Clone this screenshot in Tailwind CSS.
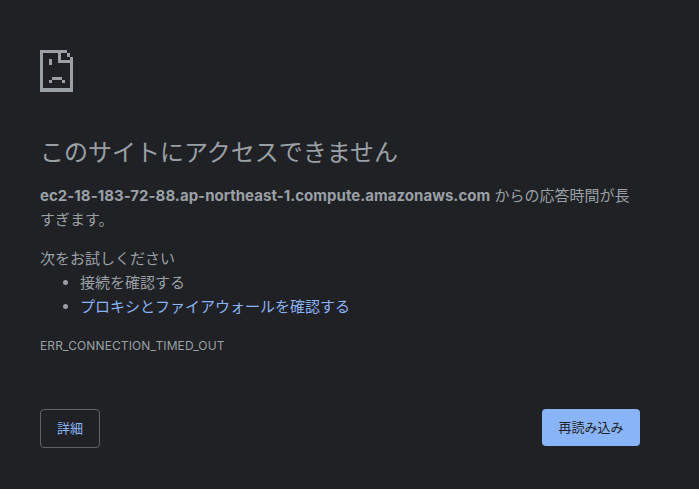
<!DOCTYPE html>
<html lang="ja">
<head>
  <meta charset="UTF-8" />
  <title>このサイトにアクセスできません</title>
  <script src="https://cdn.jsdelivr.net/npm/@tailwindcss/browser@4"></script>
</head>
<body class="bg-[#202124] h-[489px] w-[699px] overflow-hidden text-[#9aa0a6] font-['Inter','Noto_Sans_CJK_JP',sans-serif] text-[15px]">
  <main class="w-[600px] ml-[40px] pt-[50px]">
    <!-- sad page icon -->
    <svg class="block" width="33" height="42" viewBox="0 0 33 42" fill="#9aa0a6" shape-rendering="crispEdges">
      <path d="M0 0H27V3H3V38H30V7H33V42H0Z" />
      <path d="M18 0H21V10H33V13H18Z" />
      <rect x="27" y="3" width="3" height="4" />
      <rect x="9" y="9" width="3" height="6" />
      <path d="M12 27H22V30H25V33H22V30H12V33H9V30H12Z" />
    </svg>
    <h1 class="mt-[46px] text-[24px] leading-[30px] font-normal text-[#9aa0a6]">このサイトにアクセスできません</h1>
    <p class="mt-[16px] leading-[24px] text-[15px]"><strong class="font-bold tracking-[0.03px]">ec2-18-183-72-88.ap-northeast-1.compute.amazonaws.com</strong> からの応答時間が長すぎます。</p>
    <p class="mt-[15px] leading-[24px]">次をお試しください</p>
    <ul class="list-disc pl-[40px] leading-[24px]">
      <li>接続を確認する</li>
      <li><a href="#" class="text-[#8ab4f8]">プロキシとファイアウォールを確認する</a></li>
    </ul>
    <div class="mt-[19px] text-[12px] leading-[16px] tracking-[0.12px]">ERR_CONNECTION_TIMED_OUT</div>
    <div class="mt-[55px] flex justify-between items-start">
      <button class="w-[60px] h-[39px] border border-[#5f6368] rounded-[4px] text-[#8ab4f8] text-[13px]">詳細</button>
      <button class="w-[98px] h-[37px] bg-[#8ab4f8] rounded-[4px] text-[#202124] text-[13px]">再読み込み</button>
    </div>
  </main>
</body>
</html>
